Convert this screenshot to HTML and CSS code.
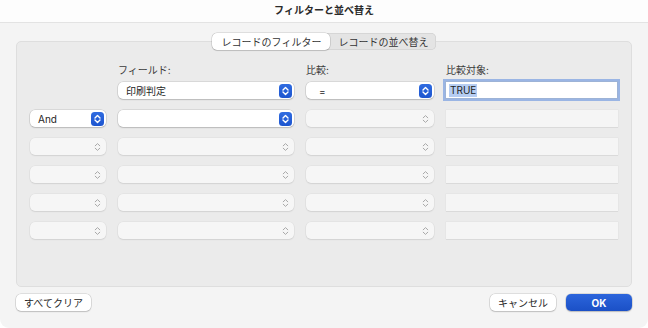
FILE: index.html
```html
<!DOCTYPE html>
<html lang="ja">
<head>
<meta charset="utf-8">
<title>フィルターと並べ替え</title>
<link rel="stylesheet" href="styles.css">
</head>
<body>
<div class="window">
  <div class="titlebar">フィルターと並べ替え</div>
  <div class="content">
    <div class="seg-wrap">
      <div class="segmented">
        <span class="seg active">レコードのフィルター</span>
        <span class="seg">レコードの並べ替え</span>
      </div>
    </div>
    <div class="panel">
      <div class="grid header">
        <span></span>
        <span class="label">フィールド:</span>
        <span class="label">比較:</span>
        <span class="label">比較対象:</span>
      </div>
      <div class="grid rows">
        <span></span>
        <div class="popup"><span class="ptext">印刷判定</span><span class="stepper"><svg width="13" height="14" viewBox="0 0 13 14"><path d="M4 6 L6.5 3.6 L9 6 M4 8 L6.5 10.4 L9 8" fill="none" stroke="#fff" stroke-width="1.4" stroke-linecap="round" stroke-linejoin="round"/></svg></span></div>
        <div class="popup"><span class="ptext eq">=</span><span class="stepper"><svg width="13" height="14" viewBox="0 0 13 14"><path d="M4 6 L6.5 3.6 L9 6 M4 8 L6.5 10.4 L9 8" fill="none" stroke="#fff" stroke-width="1.4" stroke-linecap="round" stroke-linejoin="round"/></svg></span></div>
        <div class="field focused"><span class="sel">TRUE</span></div>

        <div class="popup"><span class="ptext">And</span><span class="stepper"><svg width="13" height="14" viewBox="0 0 13 14"><path d="M4 6 L6.5 3.6 L9 6 M4 8 L6.5 10.4 L9 8" fill="none" stroke="#fff" stroke-width="1.4" stroke-linecap="round" stroke-linejoin="round"/></svg></span></div>
        <div class="popup"><span class="ptext"></span><span class="stepper"><svg width="13" height="14" viewBox="0 0 13 14"><path d="M4 6 L6.5 3.6 L9 6 M4 8 L6.5 10.4 L9 8" fill="none" stroke="#fff" stroke-width="1.4" stroke-linecap="round" stroke-linejoin="round"/></svg></span></div>
        <div class="popup disabled"><span class="ptext"></span><span class="chev"><svg width="13" height="14" viewBox="0 0 13 14"><path d="M4.2 5.8 L6.5 3.6 L8.8 5.8 M4.2 8.2 L6.5 10.4 L8.8 8.2" fill="none" stroke="#a9a9a9" stroke-width="1" stroke-linecap="round" stroke-linejoin="round"/></svg></span></div>
        <div class="field disabled"></div>

        <div class="popup disabled"><span class="ptext"></span><span class="chev"><svg width="13" height="14" viewBox="0 0 13 14"><path d="M4.2 5.8 L6.5 3.6 L8.8 5.8 M4.2 8.2 L6.5 10.4 L8.8 8.2" fill="none" stroke="#a9a9a9" stroke-width="1" stroke-linecap="round" stroke-linejoin="round"/></svg></span></div>
        <div class="popup disabled"><span class="ptext"></span><span class="chev"><svg width="13" height="14" viewBox="0 0 13 14"><path d="M4.2 5.8 L6.5 3.6 L8.8 5.8 M4.2 8.2 L6.5 10.4 L8.8 8.2" fill="none" stroke="#a9a9a9" stroke-width="1" stroke-linecap="round" stroke-linejoin="round"/></svg></span></div>
        <div class="popup disabled"><span class="ptext"></span><span class="chev"><svg width="13" height="14" viewBox="0 0 13 14"><path d="M4.2 5.8 L6.5 3.6 L8.8 5.8 M4.2 8.2 L6.5 10.4 L8.8 8.2" fill="none" stroke="#a9a9a9" stroke-width="1" stroke-linecap="round" stroke-linejoin="round"/></svg></span></div>
        <div class="field disabled"></div>

        <div class="popup disabled"><span class="ptext"></span><span class="chev"><svg width="13" height="14" viewBox="0 0 13 14"><path d="M4.2 5.8 L6.5 3.6 L8.8 5.8 M4.2 8.2 L6.5 10.4 L8.8 8.2" fill="none" stroke="#a9a9a9" stroke-width="1" stroke-linecap="round" stroke-linejoin="round"/></svg></span></div>
        <div class="popup disabled"><span class="ptext"></span><span class="chev"><svg width="13" height="14" viewBox="0 0 13 14"><path d="M4.2 5.8 L6.5 3.6 L8.8 5.8 M4.2 8.2 L6.5 10.4 L8.8 8.2" fill="none" stroke="#a9a9a9" stroke-width="1" stroke-linecap="round" stroke-linejoin="round"/></svg></span></div>
        <div class="popup disabled"><span class="ptext"></span><span class="chev"><svg width="13" height="14" viewBox="0 0 13 14"><path d="M4.2 5.8 L6.5 3.6 L8.8 5.8 M4.2 8.2 L6.5 10.4 L8.8 8.2" fill="none" stroke="#a9a9a9" stroke-width="1" stroke-linecap="round" stroke-linejoin="round"/></svg></span></div>
        <div class="field disabled"></div>

        <div class="popup disabled"><span class="ptext"></span><span class="chev"><svg width="13" height="14" viewBox="0 0 13 14"><path d="M4.2 5.8 L6.5 3.6 L8.8 5.8 M4.2 8.2 L6.5 10.4 L8.8 8.2" fill="none" stroke="#a9a9a9" stroke-width="1" stroke-linecap="round" stroke-linejoin="round"/></svg></span></div>
        <div class="popup disabled"><span class="ptext"></span><span class="chev"><svg width="13" height="14" viewBox="0 0 13 14"><path d="M4.2 5.8 L6.5 3.6 L8.8 5.8 M4.2 8.2 L6.5 10.4 L8.8 8.2" fill="none" stroke="#a9a9a9" stroke-width="1" stroke-linecap="round" stroke-linejoin="round"/></svg></span></div>
        <div class="popup disabled"><span class="ptext"></span><span class="chev"><svg width="13" height="14" viewBox="0 0 13 14"><path d="M4.2 5.8 L6.5 3.6 L8.8 5.8 M4.2 8.2 L6.5 10.4 L8.8 8.2" fill="none" stroke="#a9a9a9" stroke-width="1" stroke-linecap="round" stroke-linejoin="round"/></svg></span></div>
        <div class="field disabled"></div>

        <div class="popup disabled"><span class="ptext"></span><span class="chev"><svg width="13" height="14" viewBox="0 0 13 14"><path d="M4.2 5.8 L6.5 3.6 L8.8 5.8 M4.2 8.2 L6.5 10.4 L8.8 8.2" fill="none" stroke="#a9a9a9" stroke-width="1" stroke-linecap="round" stroke-linejoin="round"/></svg></span></div>
        <div class="popup disabled"><span class="ptext"></span><span class="chev"><svg width="13" height="14" viewBox="0 0 13 14"><path d="M4.2 5.8 L6.5 3.6 L8.8 5.8 M4.2 8.2 L6.5 10.4 L8.8 8.2" fill="none" stroke="#a9a9a9" stroke-width="1" stroke-linecap="round" stroke-linejoin="round"/></svg></span></div>
        <div class="popup disabled"><span class="ptext"></span><span class="chev"><svg width="13" height="14" viewBox="0 0 13 14"><path d="M4.2 5.8 L6.5 3.6 L8.8 5.8 M4.2 8.2 L6.5 10.4 L8.8 8.2" fill="none" stroke="#a9a9a9" stroke-width="1" stroke-linecap="round" stroke-linejoin="round"/></svg></span></div>
        <div class="field disabled"></div>
      </div>
    </div>
    <div class="footer">
      <button class="btn">すべてクリア</button>
      <span class="spacer"></span>
      <button class="btn cancel">キャンセル</button>
      <button class="btn primary">OK</button>
    </div>
  </div>
</div>
</body>
</html>
```

FILE: styles.css
```css
* { box-sizing: border-box; }
html, body {
  margin: 0;
  padding: 0;
  background: #ffffff;
}
body {
  font-family: "Inter", "Noto Sans CJK JP", sans-serif;
  font-size: 10px;
  color: #262626;
}
.window {
  width: 648px;
  height: 328px;
  background: #f4f4f4;
  border-radius: 0 0 9px 9px;
  overflow: hidden;
}
.titlebar {
  height: 23px;
  line-height: 21px;
  text-align: center;
  font-weight: 700;
  font-size: 10px;
  color: #2a2a2a;
  background: #fdfdfd;
  border-bottom: 1px solid #e3e3e3;
}
.content {
  padding: 0 16px;
}
.seg-wrap {
  display: flex;
  justify-content: center;
  margin-top: 10px;
  margin-bottom: -9px;
  position: relative;
  z-index: 1;
}
.segmented {
  display: flex;
  height: 17px;
  background: #e4e4e4;
  border-radius: 5px;
  box-shadow: inset 0 0 0 0.5px rgba(0,0,0,0.12);
}
.seg {
  display: flex;
  align-items: center;
  padding: 0 8px;
  color: #333;
  border-radius: 5px;
}
.seg.active {
  background: #ffffff;
  box-shadow: 0 0 0 0.5px rgba(0,0,0,0.18), 0 1px 1px rgba(0,0,0,0.12);
  padding: 0 9px 0 10px;
}
.panel {
  height: 246px;
  background: #ebebeb;
  border: 1px solid #dedede;
  border-radius: 5px;
  padding: 21px 13px 0 13px;
}
.grid {
  display: grid;
  grid-template-columns: 76px 176px 128px 172px;
  column-gap: 12px;
}
.header {
  height: 14px;
  line-height: 14px;
  margin-bottom: 5px;
}
.label {
  color: #3a3a3a;
}
.rows {
  row-gap: 11px;
  grid-auto-rows: 17px;
}
.popup {
  display: flex;
  align-items: center;
  height: 17px;
  background: #ffffff;
  border-radius: 5px;
  box-shadow: 0 0 0 0.5px rgba(0,0,0,0.16), 0 1px 1.5px rgba(0,0,0,0.14);
  padding: 0 2px 0 8px;
}
.ptext {
  flex: 1;
  color: #262626;
  white-space: nowrap;
}
.ptext.eq {
  padding-left: 5px;
}
.stepper {
  width: 13px;
  height: 14px;
  border-radius: 3.5px;
  background: linear-gradient(#2f6be0, #1d55cf);
  display: flex;
}
.chev {
  width: 13px;
  height: 14px;
  display: flex;
}
.popup.disabled {
  background: #f6f6f6;
  box-shadow: 0 0 0 0.5px rgba(0,0,0,0.06), 0 1px 1.5px rgba(0,0,0,0.08);
}
.field {
  height: 17px;
  display: flex;
  align-items: center;
}
.field.focused {
  height: 18px;
  margin-top: -1px;
  margin-left: -1px;
  background: #ffffff;
  border: 1px solid #9db3d6;
  box-shadow: 0 0 0 2px rgba(88,137,222,0.55);
  padding-left: 3px;
}
.sel {
  background: #b6cdf2;
  color: #1d1d1d;
  line-height: 13px;
  padding: 0 1px;
}
.field.disabled {
  background: #f5f5f5;
  box-shadow: 0 0.5px 0 rgba(0,0,0,0.1), 0 0 0 0.5px rgba(0,0,0,0.04);
}
.footer {
  display: flex;
  align-items: center;
  margin-top: 7px;
  gap: 10px;
}
.spacer { flex: 1; }
.btn {
  font-family: "Inter", "Noto Sans CJK JP", sans-serif;
  font-size: 10px;
  height: 17px;
  padding: 0 8px;
  border: none;
  border-radius: 5px;
  background: #ffffff;
  color: #262626;
  box-shadow: 0 0 0 0.5px rgba(0,0,0,0.18), 0 1px 1.5px rgba(0,0,0,0.14);
}
.btn.cancel {
  width: 66px;
}
.btn.primary {
  width: 66px;
  background: linear-gradient(#2c65dc, #1b50c6);
  color: #ffffff;
  font-weight: 700;
  box-shadow: 0 0 0 0.5px rgba(0,0,0,0.2), 0 1px 1.5px rgba(0,0,0,0.15);
}
```
